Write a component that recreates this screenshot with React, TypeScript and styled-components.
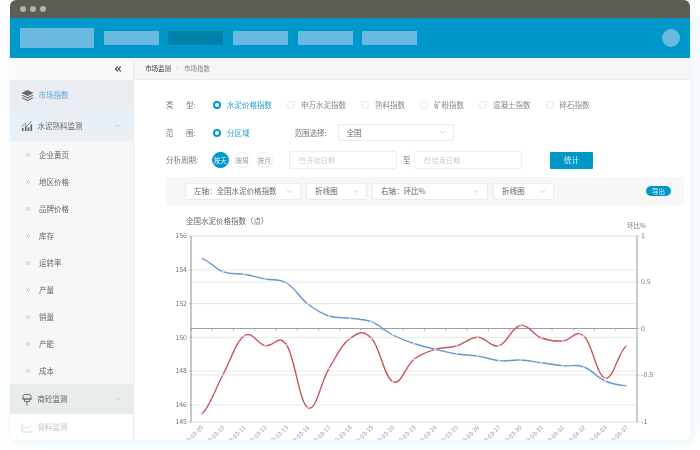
import React from 'react'
import styled, { createGlobalStyle } from 'styled-components'
import {
  Calendar,
  ChevronDown,
  ChevronRight,
  ChevronUp,
  ChevronsLeft,
  ChevronsRight,
} from 'lucide-react'

const GlobalStyle = createGlobalStyle`
  html, body {
    margin: 0;
    padding: 0;
    background: #fff;
    overflow: hidden;
  }
  *, *::before {
    box-sizing: border-box;
  }
`

const Page = styled.div`
  width: 700px;
  height: 450px;
  padding-left: 10px;
  font-family: "Noto Sans CJK SC", "Noto Sans", sans-serif;
  font-size: 7.5px;
  line-height: 1;
  color: #666;
`

const Window = styled.div`
  width: 680px;
  height: 440px;
  border-radius: 6px;
  overflow: hidden;
  display: flex;
  flex-direction: column;
  background: #fff;
  box-shadow: 3px 3px 14px rgba(0, 152, 203, 0.1);
  filter: blur(0.3px);
`

const TitleBar = styled.div`
  height: 18px;
  flex: none;
  background: #5d5d55;
  display: flex;
  align-items: center;
  gap: 4px;
  padding: 0 0 0 10px;
`

const Dot = styled.span`
  width: 6px;
  height: 6px;
  border-radius: 50%;
  background: #b4b4ae;
`

const Header = styled.div`
  height: 40px;
  flex: none;
  background: #0098cb;
  display: flex;
  align-items: center;
  gap: 9.7px;
  padding: 0 10px;
`

const Logo = styled.div`
  width: 74px;
  height: 20px;
  background: #69b9e0;
`

const NavBlock = styled.div<{ $active?: boolean }>`
  width: 55px;
  height: 14px;
  background: ${(p) => (p.$active ? '#0080a9' : '#69b9e0')};
`

const Avatar = styled.div`
  width: 18px;
  height: 18px;
  border-radius: 50%;
  background: #69b9e0;
  margin-left: auto;
`

const Body = styled.div`
  flex: 1;
  display: flex;
  min-height: 0;
`

const Sidebar = styled.aside`
  width: 124px;
  flex: none;
  background: #f7f7f7;
  border-right: 1px solid #e9e9e9;
  display: flex;
  flex-direction: column;
`

const CollapseRow = styled.div`
  height: 22px;
  flex: none;
  background: #fafafa;
  display: flex;
  align-items: center;
  justify-content: flex-end;
  padding-right: 10px;
  color: #444;
`

const MenuRow = styled.div<{ $bg: string; $h: number; $color?: string }>`
  height: ${(p) => p.$h}px;
  flex: none;
  background: ${(p) => p.$bg};
  color: ${(p) => p.$color || '#666'};
  display: flex;
  align-items: center;
  padding: 0 11px;
  gap: 4.5px;
`

const MenuArrow = styled.span`
  margin-left: auto;
  display: flex;
  color: #b9bfc4;
`

const SubRow = styled.div`
  height: 27px;
  flex: none;
  display: flex;
  align-items: center;
  padding-left: 14px;
  gap: 7px;
  color: #666;
  svg {
    color: #aaa;
  }
`

const Main = styled.main`
  flex: 1;
  min-width: 0;
  display: flex;
  flex-direction: column;
`

const Breadcrumb = styled.div`
  height: 22px;
  flex: none;
  background: #f6f6f6;
  border-bottom: 1px solid #ececec;
  display: flex;
  align-items: center;
  padding-left: 11px;
  gap: 3px;
  font-size: 6.5px;
  color: #888;
  b {
    font-weight: 400;
    color: #444;
  }
  svg {
    color: #ccc;
  }
`

const Form = styled.div`
  flex: none;
  padding: 14px 6px 0 32px;
  display: flex;
  flex-direction: column;
  gap: 5.5px;
`

const FormRow = styled.div`
  height: 22px;
  display: flex;
  align-items: center;
`

const FieldLabel = styled.div<{ $spread?: boolean }>`
  width: 47px;
  flex: none;
  color: #777;
  span {
    display: inline-block;
    width: ${(p) => (p.$spread ? '20px' : 'auto')};
  }
`

const RadioOption = styled.label<{ $checked?: boolean }>`
  display: flex;
  align-items: center;
  gap: 6px;
  margin-right: 15px;
  color: ${(p) => (p.$checked ? '#2b9fce' : '#888')};
  &::before {
    content: '';
    width: 8px;
    height: 8px;
    border-radius: 50%;
    flex: none;
    background: ${(p) => (p.$checked ? '#fff' : 'transparent')};
    border: ${(p) => (p.$checked ? '2.6px solid #0098cb' : '1px solid #e8e8e8')};
  }
`

const SubLabel = styled.span`
  margin-left: 30px;
  margin-right: 11px;
  color: #777;
`

const SelectBox = styled.div<{ $w: number }>`
  width: ${(p) => p.$w}px;
  height: 17px;
  flex: none;
  background: #fff;
  border: 1px solid #ebebeb;
  border-radius: 2px;
  display: flex;
  align-items: center;
  justify-content: space-between;
  padding: 0 6px 0 8px;
  color: #666;
  svg {
    color: #c4c4c4;
  }
`

const PeriodGroup = styled.div`
  width: 77px;
  flex: none;
  display: flex;
  gap: 5.5px;
  margin-left: -1px;
`

const PeriodDot = styled.div<{ $on?: boolean }>`
  width: 16.5px;
  height: 16.5px;
  border-radius: 50%;
  flex: none;
  display: flex;
  align-items: center;
  justify-content: center;
  font-size: 6.5px;
  background: ${(p) => (p.$on ? '#0098cb' : '#fff')};
  color: ${(p) => (p.$on ? '#e8f6fb' : '#999')};
  border: 1px solid ${(p) => (p.$on ? '#0098cb' : '#eee')};
`

const DateInput = styled.div`
  width: 108px;
  height: 18px;
  flex: none;
  border: 1px solid #eee;
  border-radius: 2px;
  display: flex;
  align-items: center;
  padding-left: 9px;
  gap: 1px;
  font-size: 7px;
  color: #ccc;
`

const To = styled.span`
  margin: 0 3.5px 0 6px;
  color: #666;
`

const SubmitButton = styled.button`
  width: 43px;
  height: 17px;
  margin-left: 28px;
  padding: 0;
  border: 0;
  border-radius: 1px;
  background: #0098cb;
  color: #d9f1f9;
  font: inherit;
`

const Toolbar = styled.div`
  height: 28px;
  margin-top: 0.5px;
  background: #f7f7f7;
  display: flex;
  align-items: center;
  gap: 5px;
  padding: 0 13px 0 19px;
`

const ExportPill = styled.div`
  width: 25px;
  height: 10px;
  margin-left: auto;
  border-radius: 5px;
  background: #0098cb;
  color: #d9f1f9;
  font-size: 6.5px;
  display: flex;
  align-items: center;
  justify-content: center;
`

const ChartBox = styled.div`
  flex: 1;
  min-height: 0;
  svg {
    display: block;
    font-family: "Noto Sans CJK SC", "Noto Sans", sans-serif;
  }
`

const subMenus = ['企业黄页', '地区价格', '品牌价格', '库存', '运转率', '产量', '销量', '产能', '成本']
const typeOptions = ['水泥价格指数', '申万水泥指数', '熟料指数', '矿粉指数', '混凝土指数', '碎石指数']

const dates = [
  '2020-03-09', '2020-03-10', '2020-03-11', '2020-03-12', '2020-03-13', '2020-03-16', '2020-03-17',
  '2020-03-18', '2020-03-19', '2020-03-20', '2020-03-23', '2020-03-24', '2020-03-25', '2020-03-26',
  '2020-03-27', '2020-03-30', '2020-03-31', '2020-04-01', '2020-04-02', '2020-04-03', '2020-04-07',
]

// pixel heights read off the reference, in page coordinates
const bluePts = [258.3, 271.7, 274.3, 279, 283, 304, 316, 318.3, 321.7, 335, 343.5, 349.3, 354, 356, 360.7, 360, 362.7, 365.7, 367, 381, 385.7]
const redPts = [414.3, 375, 336, 345.7, 345, 407.7, 368.3, 338.3, 338.3, 381.7, 359.3, 349.3, 346, 337.3, 345.7, 325.5, 338, 341, 336, 378, 345.7]

const AXIS_L = 191
const AXIS_R = 637
const band = (AXIS_R - AXIS_L) / 21
const xAt = (i: number) => AXIS_L + band * (i + 0.5)

const smoothPath = (ys: number[]) => {
  let d = `M${xAt(0)} ${ys[0]}`
  for (let i = 0; i < ys.length - 1; i++) {
    const prev = ys[Math.max(i - 1, 0)]
    const next = ys[Math.min(i + 2, ys.length - 1)]
    const c1 = ys[i] + (ys[i + 1] - prev) * 0.2
    const c2 = ys[i + 1] - (next - ys[i]) * 0.2
    d += `C${xAt(i) + band * 0.4} ${c1} ${xAt(i + 1) - band * 0.4} ${c2} ${xAt(i + 1)} ${ys[i + 1]}`
  }
  return d
}

const leftTicks = [
  { y: 236, label: '156' },
  { y: 270, label: '154' },
  { y: 303.7, label: '152' },
  { y: 337.5, label: '150' },
  { y: 371, label: '148' },
  { y: 405, label: '146' },
  { y: 422, label: '145' },
]
const rightTicks = [
  { y: 236, label: '1' },
  { y: 282, label: '0.5' },
  { y: 328.5, label: '0' },
  { y: 375, label: '-0.5' },
  { y: 422, label: '-1' },
]

const LayersIcon = () => (
  <svg width="13" height="13" viewBox="0 0 13 13" fill="#666">
    <path d="M6.5 1 12.5 4 6.5 7 .5 4Z" />
    <path d="M1.7 5.9.5 6.5l6 3 6-3-1.2-.6-4.8 2.4Z" />
    <path d="M1.7 8.4.5 9l6 3 6-3-1.2-.6-4.8 2.4Z" />
  </svg>
)

const TrendIcon = () => (
  <svg width="12" height="12" viewBox="0 0 12 12" fill="#666" stroke="#666">
    <path d="M1 6.5 4 3.5 6.5 5.5 10.5 1" fill="none" strokeWidth="0.8" />
    <path d="M1 8h1.4v3H1ZM4 6h1.4v5H4ZM6.8 7.5h1.4V11H6.8ZM9.6 4.5H11V11H9.6Z" strokeWidth="0.2" />
  </svg>
)

const PlugIcon = () => (
  <svg width="12" height="13" viewBox="0 0 12 13" fill="none" stroke="#666" strokeWidth="0.9">
    <path d="M4 1.5h4a2 2 0 0 1 2 2V6H2V3.500a2 2 0 0 1 2-2Z" />
    <path d="M1 6h10M3.500 6v2.500h5V6M6 8.500V12.500" />
  </svg>
)

const LineIcon = () => (
  <svg width="12" height="11" viewBox="0 0 12 11" fill="none" stroke="#c9cdd0" strokeWidth="0.8">
    <path d="M1 1v9h10.500M2.500 7 5 4.500 7 6.500 10.500 3.500" />
  </svg>
)

const PriceChart: React.FC = () => (
  <svg width="556" height="235" viewBox="134 205 556 235">
    {[...leftTicks, ...rightTicks].map((t) => (
      <line key={`${t.label}-${t.y}`} x1={AXIS_L} x2={AXIS_R} y1={t.y} y2={t.y} stroke="#eaeaea" strokeWidth="1.2" />
    ))}

    <line x1={AXIS_L} x2={AXIS_R} y1="328.5" y2="328.5" stroke="#8c8c8c" strokeWidth="0.8" />
    {dates.map((_, i) => (
      <line key={i} x1={AXIS_L + band * i} x2={AXIS_L + band * i} y1="328.5" y2="331" stroke="#8c8c8c" strokeWidth="0.6" />
    ))}

    <line x1={AXIS_L} x2={AXIS_L} y1="236" y2="422" stroke="#999" strokeWidth="1.1" />
    <line x1={AXIS_R} x2={AXIS_R} y1="236" y2="422" stroke="#a5a5a5" strokeWidth="1.1" />

    <text x="186" y="224" fontSize="7.5" fill="#666">全国水泥价格指数（点）</text>
    <text x="627" y="228" fontSize="6.5" fill="#777">环比%</text>

    {leftTicks.map((t) => (
      <g key={t.label}>
        <line x1={AXIS_L - 2} x2={AXIS_L} y1={t.y} y2={t.y} stroke="#999" strokeWidth="0.6" />
        <text x="187" y={t.y + 2.4} fontSize="7" fill="#777" textAnchor="end">{t.label}</text>
      </g>
    ))}
    {rightTicks.map((t) => (
      <g key={t.label}>
        <line x1={AXIS_R} x2={AXIS_R + 2} y1={t.y} y2={t.y} stroke="#999" strokeWidth="0.6" />
        <text x="641" y={t.y + 2.4} fontSize="7" fill="#777">{t.label}</text>
      </g>
    ))}

    {dates.map((d, i) => (
      <text
        key={d}
        x={xAt(i) + 2}
        y="428"
        fontSize="6"
        fill="#999"
        textAnchor="end"
        transform={`rotate(-45 ${xAt(i) + 2} 428)`}
      >
        {d}
      </text>
    ))}

    <path d={smoothPath(bluePts)} fill="none" stroke="#6497cf" strokeWidth="1.4" />
    <path d={smoothPath(redPts)} fill="none" stroke="#c9565a" strokeWidth="1.4" />
    {bluePts.map((y, i) => (
      <circle key={i} cx={xAt(i)} cy={y} r="1" fill="#d5e3f3" />
    ))}
    {redPts.map((y, i) => (
      <circle key={i} cx={xAt(i)} cy={y} r="1" fill="#f2cfd0" />
    ))}
  </svg>
)

const App: React.FC = () => {
  return (
    <Page>
      <GlobalStyle />
      <Window>
        <TitleBar>
          <Dot />
          <Dot />
          <Dot />
        </TitleBar>

        <Header>
          <Logo />
          <NavBlock />
          <NavBlock $active />
          <NavBlock />
          <NavBlock />
          <NavBlock />
          <Avatar />
        </Header>

        <Body>
          <Sidebar>
            <CollapseRow>
              <ChevronsLeft size={10} strokeWidth={2.8} />
            </CollapseRow>
            <MenuRow $bg="#e9edf1" $h={30} $color="#5aa9e0">
              <LayersIcon />
              市场指数
            </MenuRow>
            <MenuRow $bg="#e8f0f6" $h={31}>
              <TrendIcon />
              水泥熟料监测
              <MenuArrow>
                <ChevronUp size={9} />
              </MenuArrow>
            </MenuRow>
            {subMenus.map((label) => (
              <SubRow key={label}>
                <ChevronsRight size={8} />
                {label}
              </SubRow>
            ))}
            <MenuRow $bg="#e7ebec" $h={30}>
              <PlugIcon />
              商砼监测
              <MenuArrow>
                <ChevronDown size={9} />
              </MenuArrow>
            </MenuRow>
            <MenuRow $bg="#fff" $h={26} $color="#c6c6c6">
              <LineIcon />
              骨料监测
            </MenuRow>
          </Sidebar>

          <Main>
            <Breadcrumb>
              <b>市场监测</b>
              <ChevronRight size={7} />
              <span>市场指数</span>
            </Breadcrumb>

            <Form>
              <FormRow>
                <FieldLabel $spread>
                  <span>类</span>型:
                </FieldLabel>
                {typeOptions.map((label, i) => (
                  <RadioOption key={label} $checked={i === 0}>
                    {label}
                  </RadioOption>
                ))}
              </FormRow>

              <FormRow>
                <FieldLabel $spread>
                  <span>范</span>围:
                </FieldLabel>
                <RadioOption $checked>分区域</RadioOption>
                <SubLabel>范围选择:</SubLabel>
                <SelectBox $w={116}>
                  全国
                  <ChevronDown size={9} />
                </SelectBox>
              </FormRow>

              <FormRow>
                <FieldLabel>分析周期:</FieldLabel>
                <PeriodGroup>
                  <PeriodDot $on>按天</PeriodDot>
                  <PeriodDot>按周</PeriodDot>
                  <PeriodDot>按月</PeriodDot>
                </PeriodGroup>
                <DateInput>
                  <Calendar size={7} />
                  开始日期
                </DateInput>
                <To>至</To>
                <DateInput>
                  <Calendar size={7} />
                  结束日期
                </DateInput>
                <SubmitButton>统计</SubmitButton>
              </FormRow>

              <Toolbar>
                <SelectBox $w={116}>
                  左轴：全国水泥价格指数
                  <ChevronDown size={9} />
                </SelectBox>
                <SelectBox $w={61}>
                  折线图
                  <ChevronDown size={9} />
                </SelectBox>
                <SelectBox $w={116}>
                  右轴：环比%
                  <ChevronDown size={9} />
                </SelectBox>
                <SelectBox $w={61}>
                  折线图
                  <ChevronDown size={9} />
                </SelectBox>
                <ExportPill>导出</ExportPill>
              </Toolbar>
            </Form>

            <ChartBox>
              <PriceChart />
            </ChartBox>
          </Main>
        </Body>
      </Window>
    </Page>
  )
}

export default App
